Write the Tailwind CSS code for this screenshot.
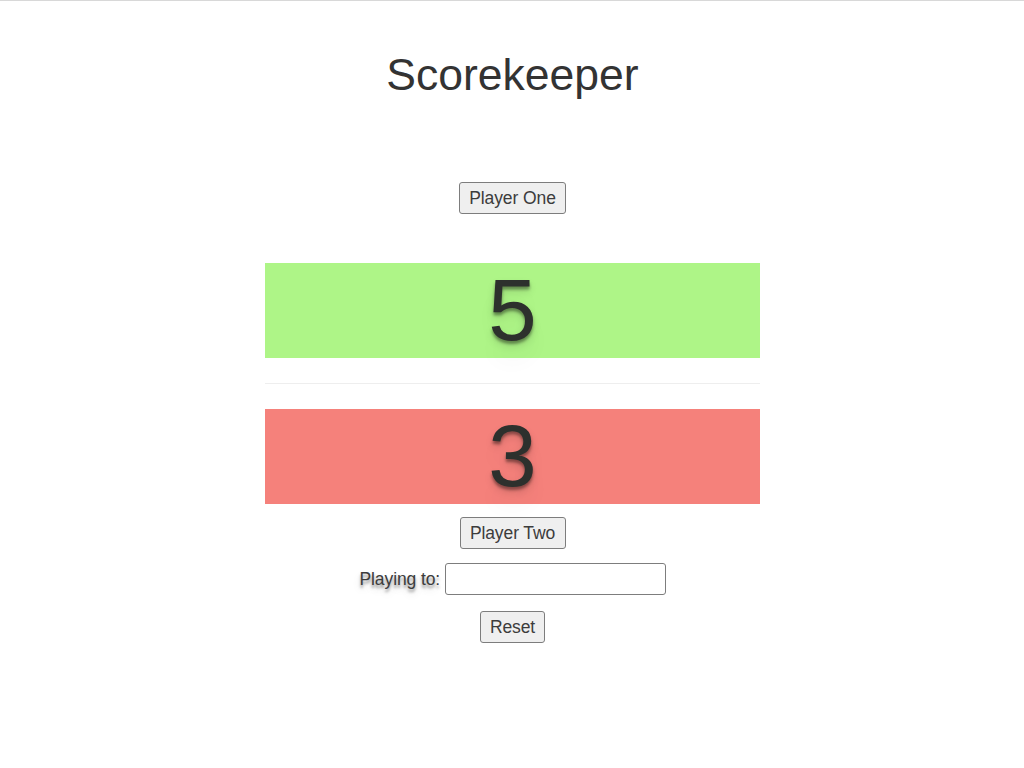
<!DOCTYPE html>
<html lang="en">
<head>
<meta charset="utf-8">
<title>Scorekeeper</title>
<script src="https://cdn.jsdelivr.net/npm/@tailwindcss/browser@4"></script>
</head>
<body class="h-screen overflow-hidden bg-white font-['Liberation_Sans',Arial,sans-serif] text-[17.5px] tracking-[-0.1px] text-[#3c3c3c]">
<div class="flex h-full flex-col items-center border-t border-[#d8d8d8]">
<h1 class="mt-[49px] h-[50px] pl-px text-[44.5px] leading-[50px] tracking-normal text-[#333]">Scorekeeper</h1>
<button class="mt-[82px] h-8 w-[107px] shrink-0 rounded-[3px] border border-[#7d7d7d] bg-[#efefef] pl-px whitespace-nowrap">Player One</button>
<main class="mt-[49px] flex w-[495px] flex-col text-center text-[87px] leading-[93px] tracking-normal text-[#2d302d] [text-shadow:0_3px_3px_#0006,0_5px_8px_#0002,0_20px_20px_#0000000c]">
<div class="h-[95px] bg-[#aef587] pl-px">5</div>
<hr class="my-[25px] border-[#eee]">
<div class="h-[95px] bg-[#f5817b] pl-px">3</div>
</main>
<button class="mt-[13px] ml-px h-8 w-[106px] shrink-0 rounded-[3px] border border-[#7d7d7d] bg-[#efefef] whitespace-nowrap">Player Two</button>
<label class="mt-3.5 flex h-8 items-center gap-[5px]"><span class="w-[81px] pl-px whitespace-nowrap [text-shadow:0_3px_3px_#0006,0_5px_8px_#0002,0_20px_20px_#0000000c]">Playing to:</span><input class="h-8 w-[221px] rounded-[3px] border border-[#7d7d7d] bg-white"></label>
<button class="mt-4 h-8 w-[65px] shrink-0 rounded-[3px] border border-[#7d7d7d] bg-[#efefef] pl-px">Reset</button>
</div>
</body>
</html>
